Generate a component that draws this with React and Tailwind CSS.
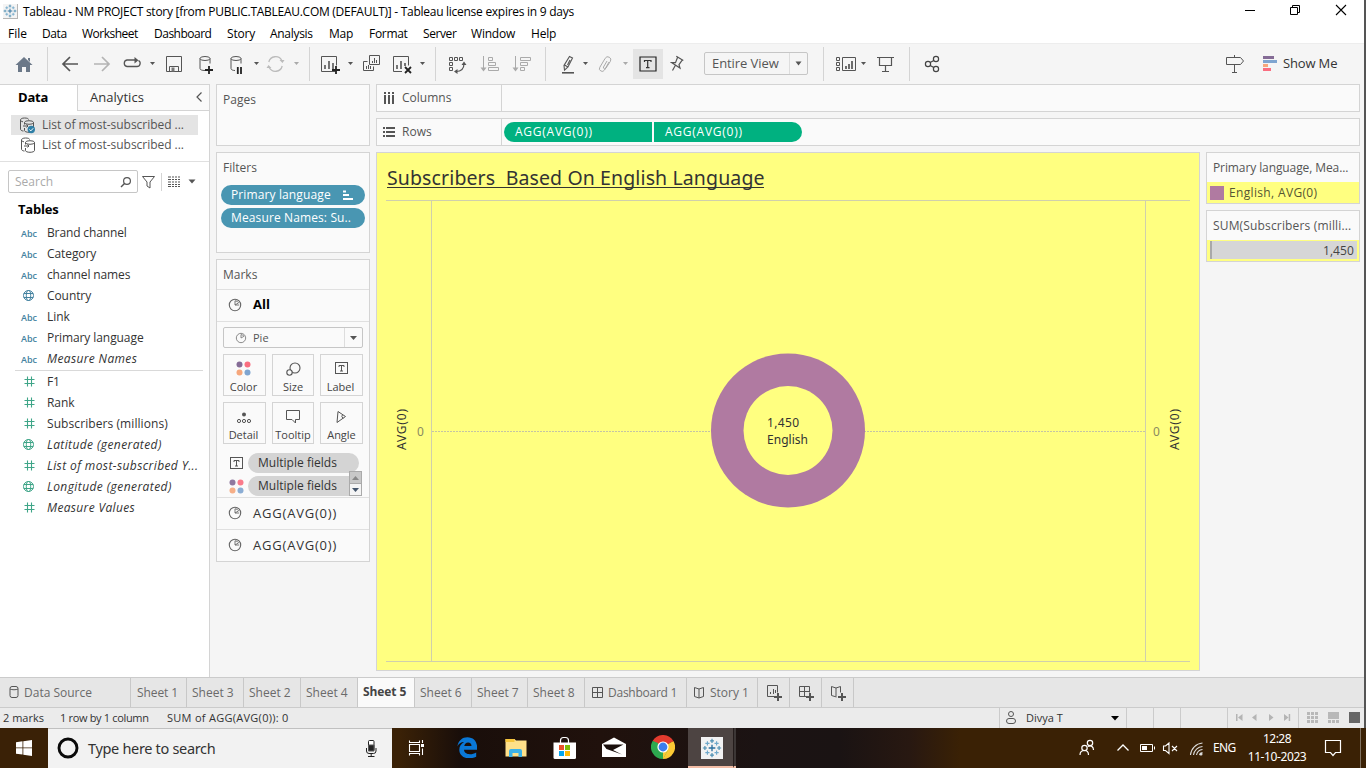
import React from "react";

function Ic({ box, className = "", children }) {
  const [, , w, h] = box.split(" ");
  return (
    <svg viewBox={box} width={w} height={h} fill="none" stroke="#555" strokeWidth="1" className={"block shrink-0 " + className}>
      {children}
    </svg>
  );
}

const Caret = ({ className = "", color = "#555" }) => (
  <Ic box="0 0 8 6" className={className}>
    <path d="M1 1h5L3.500 4z" fill={color} stroke="none" />
  </Ic>
);
const Sep = ({ className = "" }) => <div className={"h-[34px] w-px shrink-0 bg-[#d4d4d4] " + className} />;

const PieIcon = ({ className = "", color = "#666" }) => (
  <Ic box="0 0 14 14" className={className}>
    <g stroke={color} strokeWidth="1.1">
      <circle cx="7" cy="7" r="5.7" />
      <path d="M7 2.8V7l3.6-2.2A4.2 4.2 0 0 0 7 2.8zM7 7h4.2" strokeWidth="0.9" />
    </g>
  </Ic>
);

const Dots = ({ className = "" }) => (
  <Ic box="0 0 15 15" className={className}>
    <g stroke="none">
      <circle cx="3.5" cy="3.5" r="3" fill="#856c96" />
      <circle cx="11.5" cy="3.5" r="3" fill="#fa6e80" />
      <circle cx="3.5" cy="11.5" r="3" fill="#f6a77c" />
      <circle cx="11.5" cy="11.5" r="3" fill="#7fa5d0" />
    </g>
  </Ic>
);

const LabelIcon = ({ className = "", color = "#555" }) => (
  <Ic box="0 0 14 13" className={className}>
    <g stroke={color}>
      <rect x="0.5" y="0.5" width="12" height="11" />
      <path d="M4 5V3.5h5V5M6.5 3.5v5.500M5 9h3" />
    </g>
  </Ic>
);

function TableauMark({ size, className = "" }) {
  return (
    <svg viewBox="0 0 24 24" width={size} height={size} className={"block shrink-0 " + className} stroke="#3d7fa6" strokeWidth="1.4">
      <path d="M12 8v8M8 12h8" stroke="#2a6f9e" strokeWidth="1.6" />
      <path d="M12 1v5M9.7 3.5h4.6M12 18v5M9.7 20.5h4.6M3.5 9.7v4.6M1 12h5M20.5 9.7v4.6M18 12h5" stroke="#4a8db0" />
      <path d="M6.5 4v5M4 6.5h5M17.5 4v5M15 6.5h5M6.5 15v5M4 17.5h5M17.5 15v5M15 17.5h5" stroke="#6fa8ca" />
    </svg>
  );
}

function TitleBar() {
  return (
    <div className="flex h-[22px] shrink-0 items-start bg-white">
      <div className="ml-[3px] mt-[4px] h-[15px] w-[15px] border-b border-r border-[#b5b5b5] bg-[#f4f4f4]">
        <TableauMark size={14} />
      </div>
      <span className="ml-[5px] mt-[4px] text-[12px] leading-[16px] tracking-[-0.27px] text-black">
        Tableau - NM PROJECT story [from PUBLIC.TABLEAU.COM (DEFAULT)] - Tableau license expires in 9 days
      </span>
      <div className="ml-auto mt-[4px] flex">
        <Ic box="1244 4 12 14">
          <path d="M1245 10.5h10" stroke="#000" />
        </Ic>
        <Ic box="1289 4 12 14" className="ml-[33px]">
          <path d="M1290.5 7.500h7v7h-7zM1292.500 7.500v-2h7v7h-2" stroke="#000" />
        </Ic>
        <Ic box="1335 4 12 14" className="ml-[34px] mr-[17px]">
          <path d="M1336 5l10 10M1346 5l-10 10" stroke="#000" strokeWidth="1.1" />
        </Ic>
      </div>
    </div>
  );
}

function MenuBar() {
  const items = [
    ["File", "w-[34px]"],
    ["Data", "w-[40px] tracking-[-0.4px]"],
    ["Worksheet", "w-[72px] tracking-[-0.5px]"],
    ["Dashboard", "w-[73px] tracking-[-0.5px]"],
    ["Story", "w-[43px] tracking-[-0.2px]"],
    ["Analysis", "w-[59px] tracking-[-0.3px]"],
    ["Map", "w-[40px] tracking-[-0.2px]"],
    ["Format", "w-[54px] tracking-[-0.3px]"],
    ["Server", "w-[48px] tracking-[-0.4px]"],
    ["Window", "w-[60px] tracking-[-0.2px]"],
    ["Help", "w-[40px] tracking-[-0.2px]"],
  ];
  return (
    <div className="flex h-[21px] shrink-0 items-center bg-white pl-[8px] pt-[3px] text-[12px] leading-[16px] text-black">
      {items.map(([t, w]) => (
        <span key={t} className={"shrink-0 whitespace-nowrap " + w}>
          {t}
        </span>
      ))}
    </div>
  );
}

function Toolbar() {
  return (
    <div className="flex h-[41px] shrink-0 items-center border-t border-[#ededed] bg-[#f5f5f5]">
      <Ic box="14 54 20 20" className="ml-[14px]">
        <path d="M24 57l-8.500 8h2.500v7h4v-5h4v5h4v-7h2.500zM28 58h2v4l-2-2z" fill="#6b7888" stroke="none" />
      </Ic>
      <Sep className="ml-[13px]" />
      <Ic box="61 54 18 20" className="ml-[13px]">
        <path d="M78 64H63.500M70 57l-7 7 7 7" strokeWidth="1.7" />
      </Ic>
      <Ic box="93 54 18 20" className="ml-[14px]">
        <path d="M94 64h14.500M102 57l7 7-7 7" strokeWidth="1.7" stroke="#b4b4b4" />
      </Ic>
      <Ic box="122 54 20 20" className="ml-[11px]">
        <path d="M131.500 66.500H127a3.300 3.300 0 0 1 0-6.500h8.500M138.500 60.500a3.200 3.200 0 0 1-1.500 6h-6" strokeWidth="1.300" />
        <path d="M134.500 57l4 3.300-4 3.300z" fill="#555" stroke="none" />
      </Ic>
      <Caret className="ml-[7px]" />
      <Ic box="165 54 18 20" className="ml-[8px]">
        <path d="M166.500 56.500h15v15h-15zM169.500 71.500v-5h9v5" />
        <path d="M171.500 67.500v4h3v-4z" fill="#777" stroke="none" />
      </Ic>
      <Ic box="198 54 16 20" className="ml-[15px]">
        <ellipse cx="205" cy="58.500" rx="5" ry="2" />
        <path d="M200 58.500v10c0 1.300 2 2 5 2M210 58.500v5" />
        <path d="M209 66v8M205 70h8" stroke="#222" strokeWidth="1.800" />
      </Ic>
      <Ic box="229 54 16 20" className="ml-[15px]">
        <ellipse cx="236" cy="58.500" rx="5" ry="2" />
        <path d="M231 58.500v10c0 1.300 2 2 4 2M241 58.500v5" />
        <path d="M237.800 67v7M241 67v7" stroke="#222" strokeWidth="1.800" />
      </Ic>
      <Caret className="ml-[8px]" />
      <Ic box="266 54 19 20" className="ml-[5px]">
        <g stroke="#bbb" strokeWidth="1.300">
          <path d="M268.800 62a7 7 0 0 1 13-1.500M282.200 66a7 7 0 0 1-13 1.500" />
          <path d="M279.500 60h5l-2 3zM266.500 68h5l-3-3z" fill="#bbb" stroke="none" />
        </g>
      </Ic>
      <Caret className="ml-[8px]" color="#aaa" />
      <Sep className="ml-[8px]" />
      <Ic box="320 54 21 20" className="ml-[10px]">
        <path d="M335.500 71.500h-14v-15h15v9" />
        <path d="M325 69v-4M329 69v-8M333 69v-6" strokeWidth="1.600" />
        <path d="M336 66v8M332 70h8" stroke="#222" strokeWidth="1.800" />
      </Ic>
      <Caret className="ml-[6px]" />
      <Ic box="362 54 19 20" className="ml-[7px]">
        <path d="M369.500 55.500h10v9h-10zM367.500 61.500h-4v9h10v-4" />
        <path d="M372.500 63v-2M374.500 63v-5M376.500 63v-3M366.500 69v-3M368.500 69v-4M370.500 69v-3" />
      </Ic>
      <Ic box="392 54 21 20" className="ml-[11px]">
        <path d="M402 71.500h-8.500v-15h15v9" />
        <path d="M397 69v-4M401 69v-8M405 66v-3" strokeWidth="1.600" />
        <path d="M405 67l6 6M411 67l-6 6" stroke="#222" strokeWidth="1.800" />
      </Ic>
      <Caret className="ml-[6px]" />
      <Sep className="ml-[8px]" />
      <Ic box="448 54 19 20" className="ml-[12px]">
        <path d="M449.500 57.500h3v3h-3zM454.500 57.500h3v3h-3zM459.500 57.500h3v3h-3zM449.500 62.500h3v3h-3zM449.500 67.500h3v3h-3z" />
        <path d="M464 63.500c0 5-3 8-8 8" strokeWidth="1.200" />
        <path d="M461.500 65l2.500-3.500 2.500 3.500zM457.500 69l-3.500 2.500 3.500 2.500z" fill="#555" stroke="none" />
      </Ic>
      <Ic box="480 54 20 20" className="ml-[13px]">
        <g stroke="#aaa">
          <path d="M483.500 56v13M488.500 57.500h4v3h-4zM488.500 62.500h7v3h-7zM488.500 67.500h10v3h-10z" />
          <path d="M480.500 67.500h6l-3 4z" fill="#aaa" stroke="none" />
        </g>
      </Ic>
      <Ic box="512 54 20 20" className="ml-[12px]">
        <g stroke="#aaa">
          <path d="M515.500 56v13M520.500 57.500h10v3h-10zM520.500 62.500h7v3h-7zM520.500 67.500h4v3h-4z" />
          <path d="M512.500 67.500h6l-3 4z" fill="#aaa" stroke="none" />
        </g>
      </Ic>
      <Sep className="ml-[13px]" />
      <Ic box="561 54 15 20" className="ml-[15px]">
        <path d="M569.500 56.500l3 1.500-4.500 9-3.500 3.200-.5-4.800zM564.500 65l3.500 2M570 60l-2.500 5" strokeWidth="1.100" />
        <path d="M562 72.800h12" strokeWidth="1.600" />
      </Ic>
      <Caret className="ml-[6px]" />
      <Ic box="598 54 15 20" className="ml-[8px]">
        <path d="M609 62l-4.500 8a2.700 2.700 0 0 1-4.700-2.700l5.400-9a3 3 0 0 1 5.200 3L606 68a1.300 1.300 0 0 1-2.500-1l3.500-6" stroke="#aaa" />
      </Ic>
      <Caret className="ml-[9px]" color="#aaa" />
      <div className="ml-[3px] flex h-[30px] w-[30px] shrink-0 items-center justify-center bg-[#e4e4e4]">
        <Ic box="0 0 18 16">
          <path d="M1 1h16v14h-16z" stroke="#222" strokeWidth="1.200" />
          <path d="M5.500 6V4.500h6.500V6M8.700 4.500v7.300M7 11.600h3.500" stroke="#333" strokeWidth="1.200" />
        </Ic>
      </div>
      <Ic box="670 54 15 20" className="ml-[7px]">
        <path d="M676.300 56.300l7 4.300M677.500 57.500l-2 5.200h-3.700l8.200 5.300-1-3.300 3.200-4.500M675.300 65.500l-2.800 5" strokeWidth="1.200" />
      </Ic>
      <div className="mb-px ml-[19px] flex h-[23px] w-[104px] shrink-0 items-center rounded-[2px] border border-[#c6c6c6] bg-[#f5f5f5]">
        <span className="ml-[7px] w-[77px] shrink-0 whitespace-nowrap pb-px text-[13px] leading-[16px] tracking-[-0.08px] text-[#555]">Entire View</span>
        <div className="flex h-full flex-1 items-center justify-center border-l border-[#ddd]">
          <svg width="7" height="5" viewBox="0 0 7 5">
            <path d="M0.500 0.500h6l-3 4z" fill="#555" />
          </svg>
        </div>
      </div>
      <Sep className="ml-[15px]" />
      <Ic box="835 54 22 20" className="ml-[11px]">
        <path d="M836.500 57.500h3v3h-3zM836.500 62.500h3v3h-3zM836.500 67.500h3v3h-3zM842.500 57.500h13v13h-13z" />
        <path d="M846 69v-3M849 69v-5M852 69v-8" strokeWidth="1.700" />
      </Ic>
      <Caret className="ml-[3px]" />
      <Ic box="876 54 19 20" className="ml-[8px]">
        <path d="M877 57.500h17M879.500 57.500v8h12v-8M885.500 65.500v6M882 71.500h7" strokeWidth="1.200" />
      </Ic>
      <Sep className="ml-[14px]" />
      <Ic box="924 54 17 20" className="ml-[14px]">
        <g strokeWidth="1.200" stroke="#444">
          <circle cx="928" cy="64" r="2.600" />
          <circle cx="936" cy="59" r="2.600" />
          <circle cx="936" cy="69" r="2.600" />
          <path d="M930.200 62.600l3.600-2.200M930.200 65.400l3.600 2.200" />
        </g>
      </Ic>
      <Ic box="1225 54 20 20" className="ml-auto">
        <path d="M1234.500 55v2.500M1226.500 57.500h14l3 3.500-3 3.500h-14zM1234.500 64.500v8M1232 72.500h5" />
      </Ic>
      <Ic box="1262 54 16 20" className="ml-[17px]">
        <g stroke="none">
          <path d="M1263 56h11v3h-11z" fill="#856c96" />
          <path d="M1263 60h14v3h-14z" fill="#7fa5d0" />
          <path d="M1263 64h5v3h-5z" fill="#f6a77c" />
          <path d="M1263 68h8v3h-8z" fill="#fa6e80" />
        </g>
      </Ic>
      <span className="ml-[5px] w-[81px] shrink-0 whitespace-nowrap pb-[2px] text-[13px] leading-[16px] tracking-[-0.15px] text-[#333]">Show Me</span>
    </div>
  );
}

const Abc = () => <span className="mt-[2px] w-[17px] text-[9px] font-semibold leading-[12px] text-[#4482a0]">Abc</span>;
const Globe = ({ color }) => (
  <svg width="11" height="11" viewBox="0 0 11 11" fill="none" stroke={color} strokeWidth="1" className="ml-[2px]">
    <circle cx="5.500" cy="5.500" r="5" />
    <ellipse cx="5.500" cy="5.500" rx="2.200" ry="5" />
    <path d="M0.800 3.500h9.400M0.800 7.500h9.400" />
  </svg>
);
const Hash = () => (
  <svg width="11" height="11" viewBox="0 0 11 11" fill="none" stroke="#3fa588" strokeWidth="1.100" className="ml-[3px]">
    <path d="M3.500 0.500v10M7.500 0.500v10M0.500 3.500h10M0.500 7.500h10" />
  </svg>
);

function Field({ kind, italic, fit = "tracking-[-0.08px]", children }) {
  return (
    <div className="flex h-[21px] items-center pl-[21px]">
      <div className="flex w-[26px] items-center">
        {kind === "abc" && <Abc />}
        {kind === "num" && <Hash />}
        {kind === "geo" && <Globe color="#4482a0" />}
        {kind === "geog" && <Globe color="#3fa588" />}
      </div>
      <span className={"whitespace-nowrap text-[12px] leading-[16px] text-[#333] " + (italic ? "italic " : "") + fit}>{children}</span>
    </div>
  );
}

const DbIcon = ({ checked, className = "" }) => (
  <Ic box="0 0 17 17" className={className}>
    <path d="M1.500 3v9c0 1 1 2 3 2M1.500 3c0-1.200 1.500-2 4-2s4 .5 4 1.500M1.500 3c0 1 1 1.500 2.500 1.800M4 9h5M7.500 7.500L9 9l-1.500 1.500" />
    <ellipse cx="10" cy="5.500" rx="4.500" ry="1.800" />
    <path d="M5.500 5.500v2M5.500 11v2.500c0 1 2 1.800 4.500 1.800s4.500-.8 4.500-1.800v-8" />
    {checked && (
      <g>
        <circle cx="12.300" cy="12.500" r="3.700" fill="#2f7fa6" stroke="none" />
        <path d="M10.500 12.500l1.300 1.400 2.400-2.600" stroke="#fff" />
      </g>
    )}
  </Ic>
);

function DataPane() {
  return (
    <div className="flex w-[210px] shrink-0 flex-col border-r border-t border-[#d4d4d4] bg-white">
      <div className="flex h-[26px] shrink-0">
        <div className="w-[77px] pl-[18px] text-[13px] font-bold leading-[25px] tracking-[-0.2px] text-black">Data</div>
        <div className="flex flex-1 items-center border-b border-l border-[#d4d4d4] bg-[#fafafa] pb-px pl-[12px]">
          <span className="text-[13px] leading-[16px] tracking-[0.04px] text-[#333]">Analytics</span>
          <Ic box="194 91 9 12" className="ml-auto mr-[5px]">
            <path d="M200.500 92.500l-4.500 4.500 4.500 4.500" strokeWidth="1.200" />
          </Ic>
        </div>
      </div>
      <div className="ml-[11px] mt-[4px] flex h-[20px] w-[187px] shrink-0 items-center self-start bg-[#e4e4e4] pl-[8px] text-[12px] leading-[16px] text-[#555]">
        <DbIcon checked />
        <span className="ml-[6px] whitespace-nowrap tracking-[-0.03px]">List of most-subscribed ...</span>
      </div>
      <div className="ml-[11px] flex h-[20px] w-[187px] shrink-0 items-center pl-[9px] text-[12px] leading-[16px] text-[#555]">
        <DbIcon />
        <span className="ml-[5px] whitespace-nowrap tracking-[-0.03px]">List of most-subscribed ...</span>
      </div>
      <div className="mt-[6px] h-px shrink-0 bg-[#e0e0e0]" />
      <div className="mt-[8px] flex h-[23px] shrink-0 items-center pl-[8px]">
        <div className="flex h-[23px] w-[130px] items-center rounded-[2px] border border-[#c6c6c6] pl-[6px] pr-[4px]">
          <span className="text-[12px] leading-[16px] text-[#aaa]">Search</span>
          <Ic box="119 175 14 12" className="ml-auto">
            <circle cx="127" cy="180" r="3.400" strokeWidth="1.200" />
            <path d="M124.500 182.500l-3.500 3.500" strokeWidth="1.400" />
          </Ic>
        </div>
        <Ic box="141 173 16 16" className="ml-[3px]">
          <path d="M142.500 175.500h12l-4.500 5.500v6l-3-2v-4z" />
        </Ic>
        <div className="ml-[4px] h-[18px] w-px bg-[#d4d4d4]" />
        <Ic box="167 174 14 13" className="ml-[5px]">
          <path d="M168 176h12M168 178.500h12M168 181h12M168 183.500h12M168 185.500h12" stroke="#555" strokeWidth="1.100" strokeDasharray="3 1 2 1 2 1 2 0" />
        </Ic>
        <svg width="8" height="5" viewBox="0 0 8 5" className="ml-[7px]">
          <path d="M0.500 0.500h7l-3.500 4z" fill="#555" />
        </svg>
      </div>
      <div className="mt-[7px] h-[18px] shrink-0 pl-[18px] text-[13px] font-bold leading-[18px] tracking-[-0.2px] text-black">Tables</div>
      <div className="mt-[4px]">
        <Field kind="abc" fit="tracking-[-0.13px]">Brand channel</Field>
        <Field kind="abc">Category</Field>
        <Field kind="abc" fit="tracking-[-0.13px]">channel names</Field>
        <Field kind="geo">Country</Field>
        <Field kind="abc">Link</Field>
        <Field kind="abc">Primary language</Field>
        <Field kind="abc" italic fit="tracking-[0.36px]">Measure Names</Field>
        <div className="ml-[15px] mr-[6px] mt-[1px] h-px bg-[#d9d9d9]" />
        <Field kind="num">F1</Field>
        <Field kind="num">Rank</Field>
        <Field kind="num" fit="tracking-[0.08px]">Subscribers (millions)</Field>
        <Field kind="geog" italic fit="tracking-[0.4px]">Latitude (generated)</Field>
        <Field kind="num" italic fit="tracking-[0.4px]">List of most-subscribed Y...</Field>
        <Field kind="geog" italic fit="tracking-[0.42px]">Longitude (generated)</Field>
        <Field kind="num" italic fit="tracking-[0.34px]">Measure Values</Field>
      </div>
    </div>
  );
}

function MarkButton({ label, className = "", children }) {
  return (
    <div className={"flex h-[42px] flex-col items-center border border-[#d4d4d4] bg-[#fafafa] " + className}>
      <div className="mt-[5px] flex h-[17px] items-center">{children}</div>
      <span className="mt-[2px] text-[11px] leading-[16px] text-[#444]">{label}</span>
    </div>
  );
}

function Shelves() {
  return (
    <div className="flex w-[154px] shrink-0 flex-col gap-[6px] text-[12px] leading-[16px] text-[#555]">
      <div className="h-[62px] border border-[#d4d4d4] bg-[#fafafa] pl-[6px] pt-[7px]">Pages</div>
      <div className="h-[101px] border border-[#d4d4d4] bg-[#fafafa] pt-[7px]">
        <div className="pl-[6px]">Filters</div>
        <div className="ml-[4px] mt-[9px] flex h-[20px] w-[144px] items-center rounded-full bg-[#4996b2] pl-[10px] font-medium tracking-[0.12px] text-white">
          <span>Primary language</span>
          <Ic box="342 190 12 11" className="ml-auto mr-[11px]">
            <path d="M343 191.500h3M343 195h6M343 199h10" stroke="#fff" strokeWidth="1.800" />
          </Ic>
        </div>
        <div className="ml-[4px] mt-[3px] flex h-[20px] w-[144px] items-center rounded-full bg-[#4996b2] pl-[10px] font-medium tracking-[0.12px] text-white">
          Measure Names: Su..
        </div>
      </div>
      <div className="flex h-[303px] flex-col border border-[#d4d4d4] bg-[#fafafa]">
        <div className="h-[30px] shrink-0 border-b border-[#e0e0e0] pl-[6px] pt-[7px]">Marks</div>
        <div className="flex h-[32px] shrink-0 items-center border-b border-[#e0e0e0] pb-px pl-[11px]">
          <PieIcon />
          <span className="ml-[11px] pb-[2px] text-[13px] font-bold text-black">All</span>
        </div>
        <div className="ml-[6px] mt-[5px] flex h-[21px] w-[140px] shrink-0 items-center rounded-[2px] border border-[#c6c6c6]">
          <Ic box="0 0 14 14" className="ml-[10px] scale-[0.850]">
            <g stroke="#777">
              <circle cx="7" cy="7" r="5.500" />
              <path d="M7 3v4l3.500-2A4 4 0 0 0 7 3z" />
            </g>
          </Ic>
          <span className="ml-[5px] text-[11px]">Pie</span>
          <div className="ml-auto flex h-full w-[18px] items-center justify-center border-l border-[#ddd]">
            <svg width="7" height="4" viewBox="0 0 7 4">
              <path d="M0 0h7L3.500 4z" fill="#555" />
            </svg>
          </div>
        </div>
        <div className="ml-[6px] mt-[6px] flex w-[140px] justify-between">
          <MarkButton label="Color" className="w-[43px] pr-[2px]"><Dots /></MarkButton>
          <MarkButton label="Size" className="w-[42px]">
            <Ic box="285 360 17 16">
              <circle cx="295" cy="367" r="5" strokeWidth="1.100" />
              <circle cx="289.500" cy="371.500" r="2.700" fill="#fafafa" strokeWidth="1.100" />
            </Ic>
          </MarkButton>
          <MarkButton label="Label" className="w-[43px] pr-[2px]"><LabelIcon className="ml-[2px]" /></MarkButton>
        </div>
        <div className="ml-[6px] mt-[6px] flex w-[140px] justify-between">
          <MarkButton label="Detail" className="w-[43px] pr-[2px]">
            <Ic box="236 408 16 14">
              <circle cx="244" cy="412.500" r="2" fill="#555" stroke="none" />
              <circle cx="239" cy="419" r="1.600" />
              <circle cx="244" cy="419" r="1.600" />
              <circle cx="249" cy="419" r="1.600" />
            </Ic>
          </MarkButton>
          <MarkButton label="Tooltip" className="w-[42px]">
            <Ic box="285 408 16 15">
              <path d="M286.500 409.500h13v9h-4v3.500l-3.500-3.500h-5.500z" />
            </Ic>
          </MarkButton>
          <MarkButton label="Angle" className="w-[43px]">
            <Ic box="334 407 14 15" className="-ml-px">
              <path d="M338 409.500l7.500 5-8.500 6zM342.500 412.500q-1.500 2 .5 4" />
            </Ic>
          </MarkButton>
        </div>
        <div className="relative mt-[9px] flex h-[44px] shrink-0 flex-col gap-[3px] pl-[12px] font-medium tracking-[0.02px] text-[#333]">
          <div className="flex h-[20px] items-center">
            <LabelIcon className="ml-[1px]" />
            <div className="ml-[4px] h-[20px] w-[111px] rounded-full bg-[#d4d4d4] pl-[10px] leading-[20px]">Multiple fields</div>
          </div>
          <div className="flex h-[20px] items-center">
            <Dots className="opacity-90" />
            <div className="ml-[4px] h-[20px] w-[107px] rounded-l-full bg-[#d4d4d4] pl-[10px] leading-[20px]">Multiple fields</div>
          </div>
          <div className="absolute left-[132px] top-[18px] flex h-[25px] w-[13px] flex-col border border-[#aaa] bg-[#f4f4f4]">
            <div className="flex flex-1 items-center justify-center border-b border-[#aaa] bg-[#c8c8c8]">
              <svg width="7" height="4" viewBox="0 0 7 4"><path d="M0 4h7L3.500 0z" fill="#888" /></svg>
            </div>
            <div className="flex flex-1 items-center justify-center">
              <svg width="7" height="4" viewBox="0 0 7 4"><path d="M0 0h7L3.500 4z" fill="#44556b" /></svg>
            </div>
          </div>
        </div>
        <div className="flex h-[32px] shrink-0 items-center border-t border-[#e0e0e0] pb-[2px] pl-[11px]">
          <PieIcon />
          <span className="ml-[11px] text-[13px] tracking-[0.8px] text-[#333]">AGG(AVG(0))</span>
        </div>
        <div className="flex h-[32px] shrink-0 items-center border-t border-[#e0e0e0] pb-[2px] pl-[11px]">
          <PieIcon />
          <span className="ml-[11px] text-[13px] tracking-[0.8px] text-[#333]">AGG(AVG(0))</span>
        </div>
      </div>
    </div>
  );
}

function AxisShelf({ icon, label, children }) {
  return (
    <div className="flex h-[28px] shrink-0 border border-[#d4d4d4] bg-[#fafafa] text-[12px] text-[#555]">
      <div className="flex w-[125px] items-center border-r border-[#d4d4d4] pl-[6px]">
        {icon}
        <span className="ml-[7px] leading-[16px]">{label}</span>
      </div>
      <div className="flex items-center gap-[2px] pl-[2px] font-medium tracking-[0.75px] text-white">{children}</div>
    </div>
  );
}

function Worksheet() {
  return (
    <div className="h-[519px] w-[824px] shrink-0 border border-[#d4d4d4] bg-[#ffff80]">
      <svg width="822" height="517" viewBox="377 153 822 517" className="block" fontFamily="'Noto Sans', 'Open Sans', sans-serif" fill="#333">
        <text x="387" y="185" fontSize="19.500" textLength="377.500" xmlSpace="preserve" className="whitespace-pre">Subscribers  Based On English Language</text>
        <path d="M387 187.500h377" stroke="#333" />
        <path d="M386 200.500h804M386 661.500h804M431.500 201v460M1145.500 201v460" stroke="#d0d0ac" />
        <path d="M432 431.500h713" stroke="#c4c4a4" strokeDasharray="2 1" />
        <circle cx="788" cy="430.500" r="77" fill="#b07aa1" />
        <circle cx="788" cy="430.500" r="44.500" fill="#ffff80" />
        <text x="767" y="427" fontSize="12" textLength="32">1,450</text>
        <text x="767" y="444" fontSize="12" textLength="41">English</text>
        <text x="417" y="436" fontSize="12" fill="#8a8a60">0</text>
        <text x="1153" y="436" fontSize="12" fill="#8a8a60">0</text>
        <text transform="translate(406 450) rotate(-90)" fontSize="12" textLength="41">AVG(0)</text>
        <text transform="translate(1179 450) rotate(-90)" fontSize="12" textLength="41">AVG(0)</text>
      </svg>
    </div>
  );
}

function Legends() {
  return (
    <div className="flex w-[154px] shrink-0 flex-col gap-[6px] text-[12px] leading-[16px] text-[#555]">
      <div className="h-[52px] border border-[#d4d4d4] bg-[#fafafa]">
        <div className="h-[29px] whitespace-nowrap pl-[6px] pt-[7px] tracking-[-0.1px]">Primary language, Mea...</div>
        <div className="flex h-[21px] items-center bg-[#ffff80] pl-[3px]">
          <div className="h-[14px] w-[14px] bg-[#b07aa1]" />
          <span className="ml-[5px] tracking-[0.34px] text-[#555533]">English, AVG(0)</span>
        </div>
      </div>
      <div className="h-[52px] border border-[#d4d4d4] bg-[#fafafa]">
        <div className="h-[29px] whitespace-nowrap pl-[6px] pt-[7px] tracking-[0.16px]">SUM(Subscribers (milli...</div>
        <div className="h-[21px] bg-[#ffff80] pb-[2px] pl-[3px] pr-[2px] pt-px">
          <div className="h-[18px] border-l-2 border-[#a8a8a8] bg-[#d6d6d6] pr-[3px] text-right leading-[19px] tracking-[0.1px] text-[#444]">1,450</div>
        </div>
      </div>
    </div>
  );
}

const Plus = ({ x, y }) => <path d={`M${x} ${y - 4}v8M${x - 4} ${y}h8`} strokeWidth="2" />;

function SheetTabs() {
  const sheets = [
    ["Sheet 1", "w-[56px]"],
    ["Sheet 3", "w-[57px]"],
    ["Sheet 2", "w-[57px]"],
    ["Sheet 4", "w-[57px]"],
    ["Sheet 5", "w-[57px]"],
    ["Sheet 6", "w-[57px]"],
    ["Sheet 7", "w-[56px]"],
    ["Sheet 8", "w-[57px]"],
  ];
  const cell = "flex shrink-0 items-center whitespace-nowrap border-r border-[#c8c8c8] ";
  return (
    <div className="flex h-[31px] shrink-0 border-b border-t border-[#cbcbcb] bg-[#e6e6e6] text-[12px] leading-[16px] text-[#6a6a6a]">
      <div className={cell + "w-[131px] pl-[8px]"}>
        <Ic box="8 684 12 14" className="mb-[2px]">
          <rect x="10" y="685.500" width="8" height="11" rx="2" />
          <path d="M10 688c2 1 6 1 8 0" />
        </Ic>
        <span className="ml-[4px]">Data Source</span>
      </div>
      {sheets.map(([t, w]) => (
        <div key={t} className={cell + w + (t === "Sheet 5" ? " bg-[#fafafa] pb-[2px] pl-[5px] font-bold tracking-[-0.1px] text-[#444]" : t === "Sheet 1" ? " pl-[6px] tracking-[-0.1px]" : " pl-[5px]")}>
          {t}
        </div>
      ))}
      <div className={cell + "w-[102px] pl-[6px]"}>
        <Ic box="591 685 12 12" className="mb-[2px]">
          <path d="M592.500 686.500h10v10h-10zM597.500 686.500v10M592.500 691.500h10" />
        </Ic>
        <span className="ml-[5px] tracking-[-0.25px]">Dashboard 1</span>
      </div>
      <div className={cell + "w-[71px] pl-[6px]"}>
        <Ic box="693 685 12 13" className="mb-px">
          <path d="M699 688l-4.500-1.500v9l4.500 1.500 4.500-1.500v-9zM699 688v9" />
        </Ic>
        <span className="ml-[5px]">Story 1</span>
      </div>
      <div className={cell + "w-[32px] pl-[8px]"}>
        <Ic box="766 684 17 17">
          <path d="M777 696.500h-9.500v-11h10v7M770.500 694v-2M773.500 694v-5M775.500 693v-3" />
          <Plus x={778} y={697} />
        </Ic>
      </div>
      <div className={cell + "w-[32px] pl-[8px]"}>
        <Ic box="798 684 17 17">
          <path d="M808 696.500h-8.500v-10h10v6M804.500 686.500v10M799.500 691.500h10" />
          <Plus x={810} y={697} />
        </Ic>
      </div>
      <div className={cell + "w-[32px] pl-[8px]"}>
        <Ic box="830 684 17 17">
          <path d="M836.500 697l-5-1.500v-9l4.500 1.500 4.500-1.500v6M836 688v8.500" />
          <Plus x={842} y={697} />
        </Ic>
      </div>
    </div>
  );
}

function StatusBar() {
  const c = "h-full shrink-0 border-l border-[#cbcbcb] ";
  return (
    <div className="flex h-[20px] shrink-0 items-center bg-[#ebebeb] text-[11px] leading-[16px] text-[#333]">
      <span className="ml-[3px] w-[57px]">2 marks</span>
      <span className="w-[107px] tracking-[-0.33px]">1 row by 1 column</span>
      <span className="tracking-[0.28px]">SUM of AGG(AVG(0)): 0</span>
      <div className="ml-auto flex h-full">
        <div className={c + "flex w-[127px] items-center"}>
          <Ic box="1004 709 14 16" className="mb-px ml-[4px]">
            <circle cx="1011" cy="713" r="2.500" />
            <rect x="1006.500" y="717.500" width="9" height="5" rx="2.500" />
          </Ic>
          <span className="ml-[8px]">Divya T</span>
          <svg width="8" height="5" viewBox="0 0 8 5" className="ml-auto mr-[7px]"><path d="M0 0h8L4 4.500z" fill="#000" /></svg>
        </div>
        <div className={c + "w-[27px]"} />
        <div className={c + "w-[27px]"} />
        <div className={c + "w-[47px]"} />
        <div className={c + "w-[71px]"}>
          <Ic box="1234 708 58 20" className="ml-[6px]">
            <g fill="#b4b4b4" stroke="none">
              <path d="M1236 714h1.500v7h-1.500zM1242.500 714v7l-4.500-3.500zM1256.500 714v7l-4.500-3.500zM1269 714v7l4.500-3.500zM1284 714v7l4.500-3.500zM1288.700 714h1.500v7h-1.500z" />
            </g>
          </Ic>
        </div>
        <div className={c + "w-[66px]"}>
          <Ic box="1299 708 65 20">
            <g fill="#b8b8b8" stroke="none">
              <path d="M1307 712h3v3h-3zM1311 712h3v3h-3zM1315 712h3v3h-3zM1307 716h3v3h-3zM1311 716h3v3h-3zM1315 716h3v3h-3zM1307 720h3v3h-3zM1311 720h3v3h-3zM1315 720h3v3h-3z" />
              <path d="M1328 712h11v7h-11zM1328 720h3v3h-3zM1332 720h3v3h-3zM1336 720h3v3h-3z" />
              <path d="M1349 712h11v11h-11z" fill="#666" />
            </g>
          </Ic>
        </div>
      </div>
    </div>
  );
}

function Taskbar() {
  return (
    <div className="flex h-[40px] shrink-0 bg-[linear-gradient(to_right,#3a2106_0px,#3a2106_400px,#190e0a_460px,#20110c_600px,#1b1313_760px,#1a1313_840px,#281811_910px,#3a2105_960px)] font-['Noto_Sans','Open_Sans',sans-serif] text-white">
      <div className="flex w-[48px] shrink-0 items-center justify-center">
        <svg width="16" height="16" viewBox="0 0 16 16" fill="#fff">
          <path d="M0 2.200L6.500 1.300v6.200H0zM7.300 1.200L16 0v7.500H7.300zM0 8.300h6.500v6.300L0 13.700zM7.300 8.300H16V16l-8.700-1.200z" />
        </svg>
      </div>
      <div className="flex w-[344px] shrink-0 items-center border-t border-[#c0c0c0] bg-[#f2f2f2] pb-[2px]">
        <Ic box="0 0 22 22" className="ml-[9px]">
          <circle cx="11" cy="11" r="9" stroke="#0a0a0a" strokeWidth="2.900" />
        </Ic>
        <span className="ml-[9px] text-[14.500px] leading-[20px] tracking-[-0.32px] text-[#333]">Type here to search</span>
        <Ic box="365 738 13 20" className="ml-auto mr-[14px]">
          <rect x="368.500" y="740.500" width="5.500" height="10" rx="1" fill="#fff" stroke="#222" />
          <path d="M368.500 745h5.500v6h-5.500z" fill="#222" />
          <path d="M366.500 748v3q0 2.500 2.500 2.500h4.500q2.500 0 2.500-2.500v-3M371.200 753.500v3M368 756.500h6.500" stroke="#222" />
        </Ic>
      </div>
      <Ic box="406 738 20 20" className="ml-[14px] mt-[10px]">
        <path d="M409.500 744.500h10v7h-10zM409.500 740.500v2h10v-2M409.500 755.500v-2h10v2M422.500 740v3M422.500 748.500v6.500" stroke="#fff" strokeWidth="1.100" />
        <path d="M421 744h3v3h-3z" fill="#fff" stroke="none" />
      </Ic>
      <svg width="20" height="22" viewBox="457 736 20 22" className="ml-[31px] mt-[8px]">
        <path d="M457.400 746.500c.9-6 5-9.300 10-9.300 6 0 9.700 4.300 9.700 10v2.600H464c.2 3 2.700 4.400 6 4.400 2.200 0 4.300-.6 6.200-1.800v4.300c-2.100 1.100-4.600 1.600-7.200 1.600-5.600 0-9.700-3.300-9.700-8.500 0-3.400 1.800-6.100 4.800-7.700-3.200.1-5.400 1.600-6.700 4.400zm6.900-.4h7.200c0-2.300-1.200-3.600-3.400-3.600-2 0-3.400 1.300-3.800 3.600z" fill="#0a78d7" />
      </svg>
      <svg width="22" height="20" viewBox="505 738 22 20" className="ml-[28px] mt-[10px]">
        <path d="M505.500 739h9l1.500 1.500h10.500v16h-21z" fill="#ffe08a" />
        <path d="M505.500 739h9v3h-9z" fill="#f7c53b" />
        <path d="M509 757v-6q0-2 2-2h9q2 0 2 2v6h-3.500v-4h-6v4z" fill="#3db2e8" />
      </svg>
      <svg width="24" height="24" viewBox="553 735 24 24" className="ml-[26px] mt-[7px]">
        <path d="M560.500 743v-2.500a3 3 0 0 1 3-3h2a3 3 0 0 1 3 3v2.500" fill="none" stroke="#fff" strokeWidth="1.200" />
        <path d="M553.500 742.500h22.500v15q0 1.500-1.500 1.500h-19.500q-1.500 0-1.500-1.500z" fill="#fff" />
        <path d="M559 745h5v5h-5z" fill="#e8512a" />
        <path d="M565 745h5v5h-5z" fill="#80bc06" />
        <path d="M559 751h5v5h-5z" fill="#05a6f0" />
        <path d="M565 751h5v5h-5z" fill="#ffba08" />
      </svg>
      <svg width="26" height="22" viewBox="601 737 26 22" className="ml-[24px] mt-[9px]">
        <path d="M602 744l12-6.500 12 6.500v13h-24z" fill="#fff" />
        <path d="M603 744.500h20.500L613 750l9 4.500-15.500-5.500z" fill="#1a0f0c" />
      </svg>
      <svg width="24" height="24" viewBox="0 0 24 24" className="ml-[24px] mt-[7px]">
        <path d="M12 12L1.600 6A12 12 0 0 1 22.400 6z" fill="#e33b2e" />
        <path d="M12 12L22.400 6A12 12 0 0 1 12 24z" fill="#fcc934" />
        <path d="M12 12l0 12A12 12 0 0 1 1.600 6z" fill="#2da94f" />
        <path d="M12 6.500h10.700A12 12 0 0 0 22.400 6L12 6z" fill="#e33b2e" />
        <path d="M6.900 14.900L1.600 6 7 8zM17 15l-5 9 1-7z" fill="#2da94f" />
        <path d="M17 15l-5 9 0-7z" fill="#fcc934" />
        <circle cx="12" cy="12" r="5.600" fill="#fff" />
        <circle cx="12" cy="12" r="4.400" fill="#3b7ded" />
      </svg>
      <div className="ml-[13px] flex w-[45px] shrink-0 items-center justify-center border-b-2 border-[#f3bda6] bg-[#4d4442]">
        <div className="ml-[2px] mt-[2px] flex h-[22px] w-[22px] items-center justify-center bg-[#f2f2f2]">
          <TableauMark size={20} />
        </div>
      </div>
      <div className="w-[3px] shrink-0 border-b-2 border-l border-b-[#f3bda6] border-l-[#241c1b] bg-[#3c3635]" />
      <div className="ml-auto flex items-center">
        <Ic box="1078 738 18 20">
          <g stroke="#fff" strokeWidth="1.200">
            <circle cx="1090" cy="743" r="2.700" />
            <circle cx="1084.500" cy="748" r="2.700" />
            <path d="M1080 755c0-3 2-4.500 4.500-4.500s4 1.500 4 4.500M1088 746.500c3-1.500 5.500 0 5.500 3.500" />
          </g>
        </Ic>
        <Ic box="1116 742 14 12" className="ml-[20px]">
          <path d="M1117.500 750.500l5.500-5.500 5.500 5.500" stroke="#fff" strokeWidth="1.300" />
        </Ic>
        <Ic box="1139 742 17 12" className="ml-[9px]">
          <path d="M1140.500 744.500h12v7h-12zM1154.500 746.500v3" stroke="#fff" />
          <path d="M1142 746h5v4h-5z" fill="#fff" stroke="none" />
        </Ic>
        <Ic box="1162 741 16 14" className="ml-[6px]">
          <path d="M1163.500 746v4.500h2l3.500 3v-10.500l-3.500 3zM1172 746l5 5M1177 746l-5 5" stroke="#fff" strokeWidth="1.100" />
        </Ic>
        <Ic box="1189 741 14 15" className="ml-[11px]">
          <g stroke="#ddd" strokeWidth="1.100">
            <path d="M1190.500 755a13 13 0 0 1 12-12M1193.500 755a10 10 0 0 1 9-8.500M1196.500 755a7 7 0 0 1 6-5.500M1199.500 755a4 4 0 0 1 3-2.500" />
            <circle cx="1201" cy="754" r="1" fill="#fff" />
          </g>
        </Ic>
        <span className="ml-[10px] w-[24px] text-[12px] leading-[16px] tracking-[-0.7px]">ENG</span>
        <div className="ml-[9px] mr-[2px] flex w-[62px] flex-col items-center text-[12px] leading-[18px] tracking-[-0.400px]">
          <span className="tracking-[-0.55px]">12:28</span>
          <span>11-10-2023</span>
        </div>
        <Ic box="1324 739 18 18" className="ml-[14px] mr-[18px]">
          <path d="M1325.500 740.500h15v12h-5l-2.500 3-2.500-3h-5z" stroke="#fff" strokeWidth="1.200" />
        </Ic>
        <div className="mr-[5px] h-[40px] w-px bg-[#80715f]" />
      </div>
    </div>
  );
}

export default function App() {
  return (
    <div className="flex h-[768px] w-[1366px] flex-col overflow-hidden bg-[#f5f5f5] font-['Open_Sans','Noto_Sans',sans-serif]">
      <div className="flex h-[728px] shrink-0 flex-col border-r-2 border-[#555]">
        <TitleBar />
        <MenuBar />
        <Toolbar />
        <div className="flex h-[593px] shrink-0">
          <DataPane />
          <div className="flex gap-[6px] pl-[6px]">
            <Shelves />
            <div className="flex w-[984px] flex-col gap-[6px]">
              <AxisShelf
                label="Columns"
                icon={
                  <Ic box="383 91 12 13">
                    <path d="M385 91v2M389 91v2M393 91v2M385 94v9M389 94v9M393 94v9" strokeWidth="2" />
                  </Ic>
                }
              />
              <AxisShelf
                label="Rows"
                icon={
                  <Ic box="383 125 12 12">
                    <path d="M383 127h2M383 131h2M383 135h2M386 127h9M386 131h9M386 135h9" strokeWidth="2" />
                  </Ic>
                }
              >
                <div className="h-[20px] w-[148px] rounded-l-full bg-[#00b180] pl-[11px] leading-[20px]">AGG(AVG(0))</div>
                <div className="h-[20px] w-[148px] rounded-r-full bg-[#00b180] pl-[11px] leading-[20px]">AGG(AVG(0))</div>
              </AxisShelf>
              <div className="flex gap-[6px]">
                <Worksheet />
                <Legends />
              </div>
            </div>
          </div>
        </div>
        <SheetTabs />
        <StatusBar />
      </div>
      <Taskbar />
    </div>
  );
}
